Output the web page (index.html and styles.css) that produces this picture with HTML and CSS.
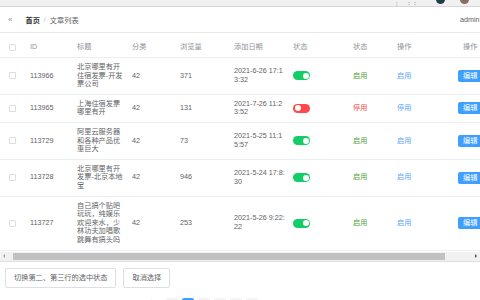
FILE: index.html
```html
<!DOCTYPE html>
<html lang="zh">
<head>
<meta charset="utf-8">
<link rel="stylesheet" href="styles.css">
</head>
<body>
<div class="page">
  <div class="chrome">
    <span class="c-mark">⁝</span>
    <span class="c-mark">⋮⋮</span>
    <span class="c-dot dark"></span>
    <span class="c-dot brown"></span>
  </div>
  <div class="topbar">
    <span class="fold">«</span>
    <span class="crumb-home">首页</span>
    <span class="crumb-sep">/</span>
    <span class="crumb-cur">文章列表</span>
    <span class="admin">admin ▾</span>
  </div>
  <div class="table-wrap">
    <table class="grid">
      <colgroup>
        <col class="w-cb"><col class="w-id"><col class="w-title"><col class="w-cat"><col class="w-view"><col class="w-date"><col class="w-sw"><col class="w-st"><col class="w-op"><col class="w-op2">
      </colgroup>
      <thead>
        <tr>
          <th class="cb-cell"><span class="cb"></span></th>
          <th>ID</th><th>标题</th><th>分类</th><th>浏览量</th><th>添加日期</th><th>状态</th><th>状态</th><th>操作</th><th class="op2-head">操作</th>
        </tr>
      </thead>
      <tbody>
        <tr>
          <td class="cb-cell"><span class="cb"></span></td>
          <td>113966</td>
          <td><div class="title">北京哪里有开住宿发票-开发票公司</div></td>
          <td>42</td><td>371</td>
          <td><div class="date">2021-6-26 17:13:32</div></td>
          <td><span class="sw on"></span></td>
          <td><span class="ok">启用</span></td>
          <td><span class="link">启用</span></td>
          <td><span class="edit">编辑</span></td>
        </tr>
        <tr>
          <td class="cb-cell"><span class="cb"></span></td>
          <td>113965</td>
          <td><div class="title">上海住宿发票哪里有开</div></td>
          <td>42</td><td>131</td>
          <td><div class="date">2021-7-26 11:23:52</div></td>
          <td><span class="sw off"></span></td>
          <td><span class="bad">停用</span></td>
          <td><span class="link">停用</span></td>
          <td><span class="edit">编辑</span></td>
        </tr>
        <tr>
          <td class="cb-cell"><span class="cb"></span></td>
          <td>113729</td>
          <td><div class="title">阿里云服务器和各种产品优惠巨大</div></td>
          <td>42</td><td>73</td>
          <td><div class="date">2021-5-25 11:15:57</div></td>
          <td><span class="sw on"></span></td>
          <td><span class="ok">启用</span></td>
          <td><span class="link">启用</span></td>
          <td><span class="edit">编辑</span></td>
        </tr>
        <tr>
          <td class="cb-cell"><span class="cb"></span></td>
          <td>113728</td>
          <td><div class="title">北京哪里有开发票-北京本地宝</div></td>
          <td>42</td><td>946</td>
          <td><div class="date">2021-5-24 17:8:30</div></td>
          <td><span class="sw on"></span></td>
          <td><span class="ok">启用</span></td>
          <td><span class="link">启用</span></td>
          <td><span class="edit">编辑</span></td>
        </tr>
        <tr>
          <td class="cb-cell"><span class="cb"></span></td>
          <td>113727</td>
          <td><div class="title">自己搞个贴吧玩玩，纯娱乐欢迎来水，少林功夫加唱歌跳舞有搞头吗</div></td>
          <td>42</td><td>253</td>
          <td><div class="date">2021-5-26 9:22:22</div></td>
          <td><span class="sw on"></span></td>
          <td><span class="ok">启用</span></td>
          <td><span class="link">启用</span></td>
          <td><span class="edit">编辑</span></td>
        </tr>
      </tbody>
    </table>
  </div>
  <div class="hscroll">
    <span class="arr-l"></span>
    <div class="track"><div class="thumb"></div></div>
    <span class="arr-r"></span>
  </div>
  <div class="actions">
    <button class="btn">切换第二、第三行的选中状态</button>
    <button class="btn">取消选择</button>
  </div>
  <div class="pager">
    <span class="p-total">共 400 条</span>
    <span class="p-btn">‹</span>
    <span class="p-num active">1</span>
    <span class="p-num">2</span>
    <span class="p-num">3</span>
    <span class="p-num">4</span>
    <span class="p-num">5</span>
  </div>
</div>
</body>
</html>
```

FILE: styles.css
```css
html, body {
  margin: 0;
  padding: 0;
  background: #ffffff;
  overflow: hidden;
}
body {
  width: 480px;
  height: 300px;
  font-family: "Liberation Sans", "Noto Sans CJK SC", sans-serif;
  font-size: 7.2px;
  color: #606266;
}
.page {
  width: 520px;
}
.chrome {
  height: 6px;
  background: #f1f1f1;
  border-bottom: 1px solid #d6d6d6;
  display: flex;
  align-items: flex-end;
  overflow: hidden;
  padding-left: 396px;
  width: 124px;
}
.c-mark {
  font-size: 6px;
  line-height: 4px;
  color: #777;
  margin-right: 8px;
}
.c-dot {
  width: 9px;
  height: 9px;
  border-radius: 50%;
  margin-bottom: 2px;
  flex: none;
}
.c-dot.dark { background: #1f3d4a; margin-left: 10px; }
.c-dot.brown { background: #8a6d5f; margin-left: 15px; }

.topbar {
  height: 25px;
  border-bottom: 1px solid #e8e8e8;
  display: flex;
  align-items: center;
  padding-left: 8px;
  width: 472px;
}
.fold {
  color: #909399;
  font-size: 8px;
  margin-right: 13px;
}
.crumb-home {
  color: #303133;
  font-weight: bold;
}
.crumb-sep {
  color: #c0c4cc;
  margin: 0 4px;
}
.crumb-cur {
  color: #606266;
}
.admin {
  margin-left: auto;
  color: #606266;
  width: 20px;
  overflow: visible;
  white-space: nowrap;
}

.table-wrap {
  width: 480px;
  overflow: hidden;
  margin-top: 5px;
}
.grid {
  border-collapse: collapse;
  table-layout: fixed;
  width: 511px;
}
.w-cb { width: 23px; }
.w-id { width: 47px; }
.w-title { width: 55px; }
.w-cat { width: 48px; }
.w-view { width: 54px; }
.w-date { width: 59px; }
.w-sw { width: 60px; }
.w-st { width: 44px; }
.w-op { width: 61px; }
.w-op2 { width: 60px; }

.grid th {
  height: 19px;
  padding: 0 0 0 7px;
  text-align: left;
  font-weight: normal;
  color: #909399;
  border-bottom: 1px solid #ebeef5;
  line-height: 8.6px;
}
.grid th.op2-head { padding-left: 12px; }
.grid td {
  padding: 5px 0 5px 7px;
  line-height: 8.6px;
  border-bottom: 1px solid #ebeef5;
  vertical-align: middle;
  color: #606266;
}
.grid .cb-cell {
  padding-left: 9px;
}
.cb {
  display: block;
  width: 5px;
  height: 5px;
  border: 1px solid #dcdfe6;
  border-radius: 1px;
  background: #fff;
}
.title {
  width: 47px;
}
.date {
  width: 51.8px;
  word-break: break-all;
}
.sw {
  display: block;
  position: relative;
  width: 17px;
  height: 9px;
  border-radius: 5px;
}
.sw::after {
  content: "";
  position: absolute;
  top: 1.5px;
  width: 6px;
  height: 6px;
  border-radius: 50%;
  background: #fff;
}
.sw.on { background: #13ce66; }
.sw.on::after { right: 1.5px; }
.sw.off { background: #ff4949; }
.sw.off::after { left: 1.5px; }
.ok { color: #4fa23a; }
.bad { color: #f0504f; }
.link { color: #5aa6f5; }
.edit {
  display: inline-block;
  background: #409eff;
  color: #fff;
  height: 12px;
  line-height: 12px;
  padding: 0 5px;
  border-radius: 2px;
}

.hscroll {
  width: 480px;
  height: 9px;
  margin-top: 1px;
  background: #f1f1f1;
  display: flex;
  align-items: center;
  border-bottom: 1px solid #dedede;
}
.arr-l, .arr-r {
  width: 0;
  height: 0;
  border-top: 2px solid transparent;
  border-bottom: 2px solid transparent;
  flex: none;
}
.arr-l {
  border-right: 2.5px solid #a3a3a3;
  margin: 0 8px 0 3px;
}
.arr-r {
  border-left: 2.5px solid #505050;
  margin: 0 3px 0 0;
}
.track {
  flex: 1;
  height: 7px;
  padding-right: 30px;
}
.thumb {
  height: 7px;
  background: #c1c1c1;
}

.actions {
  display: flex;
  gap: 7px;
  padding-left: 5px;
  margin-top: 6px;
}
.btn {
  height: 20px;
  padding: 0 8px;
  border: 1px solid #dcdfe6;
  border-radius: 2px;
  background: #fff;
  color: #606266;
  font-family: "Liberation Sans", "Noto Sans CJK SC", sans-serif;
  font-size: 7.2px;
  line-height: 18px;
}

.pager {
  display: flex;
  align-items: flex-start;
  gap: 4px;
  padding-left: 126px;
  margin-top: 10px;
  color: #606266;
}
.p-total { font-size: 7px; margin-right: 6px; }
.p-btn, .p-num {
  min-width: 12px;
  height: 12px;
  line-height: 12px;
  text-align: center;
  background: #f4f4f5;
  border-radius: 2px;
  font-size: 7px;
}
.p-num.active {
  background: #409eff;
  color: #fff;
}
```
